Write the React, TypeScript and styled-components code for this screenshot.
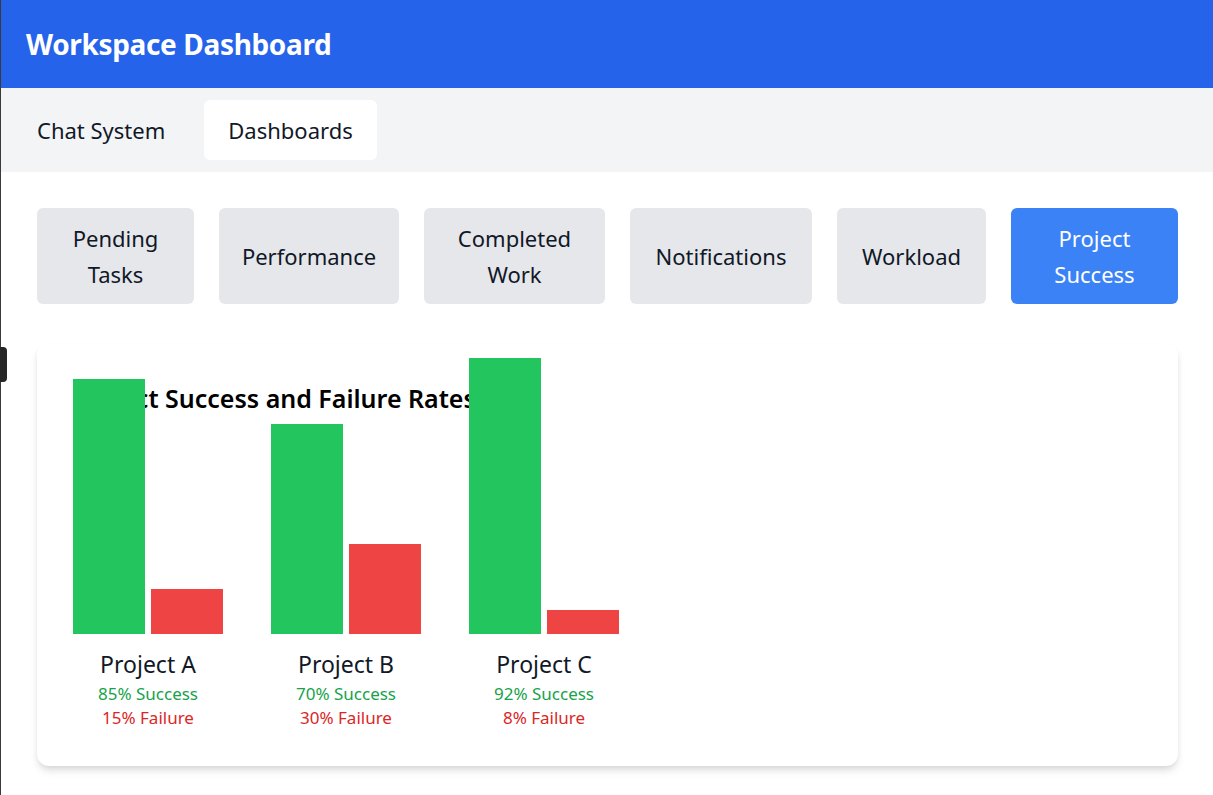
import React, { useState } from "react";
import styled, { createGlobalStyle } from "styled-components";

const GlobalStyle = createGlobalStyle`
  html, body { margin: 0; padding: 0; background: #ffffff; }
  body {
    font-family: "Noto Sans", "Open Sans", sans-serif;
    color: #111827;
    border-left: 1px solid #3a3a3a;
    min-height: 795px;
    box-sizing: border-box;
  }
  * { box-sizing: border-box; }
`;

const EdgeTab = styled.div`
  position: fixed;
  left: 0;
  top: 347px;
  width: 7px;
  height: 35px;
  background: #262626;
  border-radius: 0 4px 4px 0;
`;

const Header = styled.header`
  height: 88px;
  background: #2563eb;
  display: flex;
  align-items: center;
  padding: 0 25px;
`;

const Title = styled.h1`
  margin: 0;
  color: #ffffff;
  font-size: 28px;
  font-weight: 700;
  letter-spacing: -0.35px;
`;

const TabBar = styled.nav`
  background: #f3f4f6;
  padding: 12px;
  display: flex;
  gap: 15px;
`;

const Tab = styled.button<{ $active?: boolean }>`
  border: none;
  border-radius: 6px;
  padding: 12px 24px;
  font-family: inherit;
  font-size: 22px;
  line-height: 36px;
  color: #111827;
  background: ${(p) => (p.$active ? "#ffffff" : "transparent")};
  cursor: pointer;
`;

const Content = styled.main`
  padding: 36px 35px 36px 36px;
`;

const DashRow = styled.div`
  display: flex;
  gap: 25px;
  margin-bottom: 39px;
`;

const DashButton = styled.button<{ $active?: boolean; $w: number }>`
  flex: none;
  width: ${(p) => p.$w}px;
  height: 96px;
  border: none;
  border-radius: 6px;
  padding: 12px 20px;
  font-family: inherit;
  font-size: 22px;
  line-height: 36px;
  text-align: center;
  color: ${(p) => (p.$active ? "#ffffff" : "#111827")};
  background: ${(p) => (p.$active ? "#3b82f6" : "#e5e7eb")};
  cursor: pointer;
`;

const Card = styled.section`
  background: #ffffff;
  border-radius: 12px;
  padding: 36px;
  box-shadow: 0 6px 9px -1px rgba(0, 0, 0, 0.1), 0 3px 6px -2px rgba(0, 0, 0, 0.1);
`;

const CardTitle = styled.h2`
  margin: 0 0 28px;
  font-size: 25px;
  line-height: 38px;
  font-weight: 600;
  color: #000000;
`;

const Chart = styled.div`
  height: 285px;
  display: flex;
  align-items: flex-end;
  gap: 48px;
`;

const Group = styled.div`
  display: flex;
  flex-direction: column;
  align-items: center;
`;

const Bars = styled.div`
  display: flex;
  align-items: flex-end;
  gap: 6px;
`;

const Bar = styled.div<{ $kind: "success" | "failure" }>`
  width: 72px;
  background: ${(p) => (p.$kind === "success" ? "#22c55e" : "#ef4444")};
`;

const GroupName = styled.div`
  margin-top: 12px;
  font-size: 23px;
  line-height: 36px;
  color: #111827;
`;

const Stat = styled.div<{ $kind: "success" | "failure" }>`
  font-size: 17px;
  line-height: 24px;
  color: ${(p) => (p.$kind === "success" ? "#16a34a" : "#dc2626")};
`;

const dashboards = [
  { label: "Pending Tasks", w: 157 },
  { label: "Performance", w: 180 },
  { label: "Completed Work", w: 181 },
  { label: "Notifications", w: 182 },
  { label: "Workload", w: 149 },
  { label: "Project Success", w: 167 },
];

const projects = [
  { name: "Project A", success: 85, failure: 15 },
  { name: "Project B", success: 70, failure: 30 },
  { name: "Project C", success: 92, failure: 8 },
];

export default function App() {
  const [tab, setTab] = useState("Dashboards");
  const [dash, setDash] = useState("Project Success");
  return (
    <>
      <GlobalStyle />
      <EdgeTab />
      <Header>
        <Title>Workspace Dashboard</Title>
      </Header>
      <TabBar>
        {["Chat System", "Dashboards"].map((t) => (
          <Tab key={t} $active={tab === t} onClick={() => setTab(t)}>
            {t}
          </Tab>
        ))}
      </TabBar>
      <Content>
        <DashRow>
          {dashboards.map((d) => (
            <DashButton
              key={d.label}
              $w={d.w}
              $active={dash === d.label}
              onClick={() => setDash(d.label)}
            >
              {d.label}
            </DashButton>
          ))}
        </DashRow>
        <Card>
          <CardTitle>Project Success and Failure Rates</CardTitle>
          <Chart>
            {projects.map((p) => (
              <Group key={p.name}>
                <Bars>
                  <Bar $kind="success" style={{ height: p.success * 3 }} />
                  <Bar $kind="failure" style={{ height: p.failure * 3 }} />
                </Bars>
                <GroupName>{p.name}</GroupName>
                <Stat $kind="success">{p.success}% Success</Stat>
                <Stat $kind="failure">{p.failure}% Failure</Stat>
              </Group>
            ))}
          </Chart>
        </Card>
      </Content>
    </>
  );
}
